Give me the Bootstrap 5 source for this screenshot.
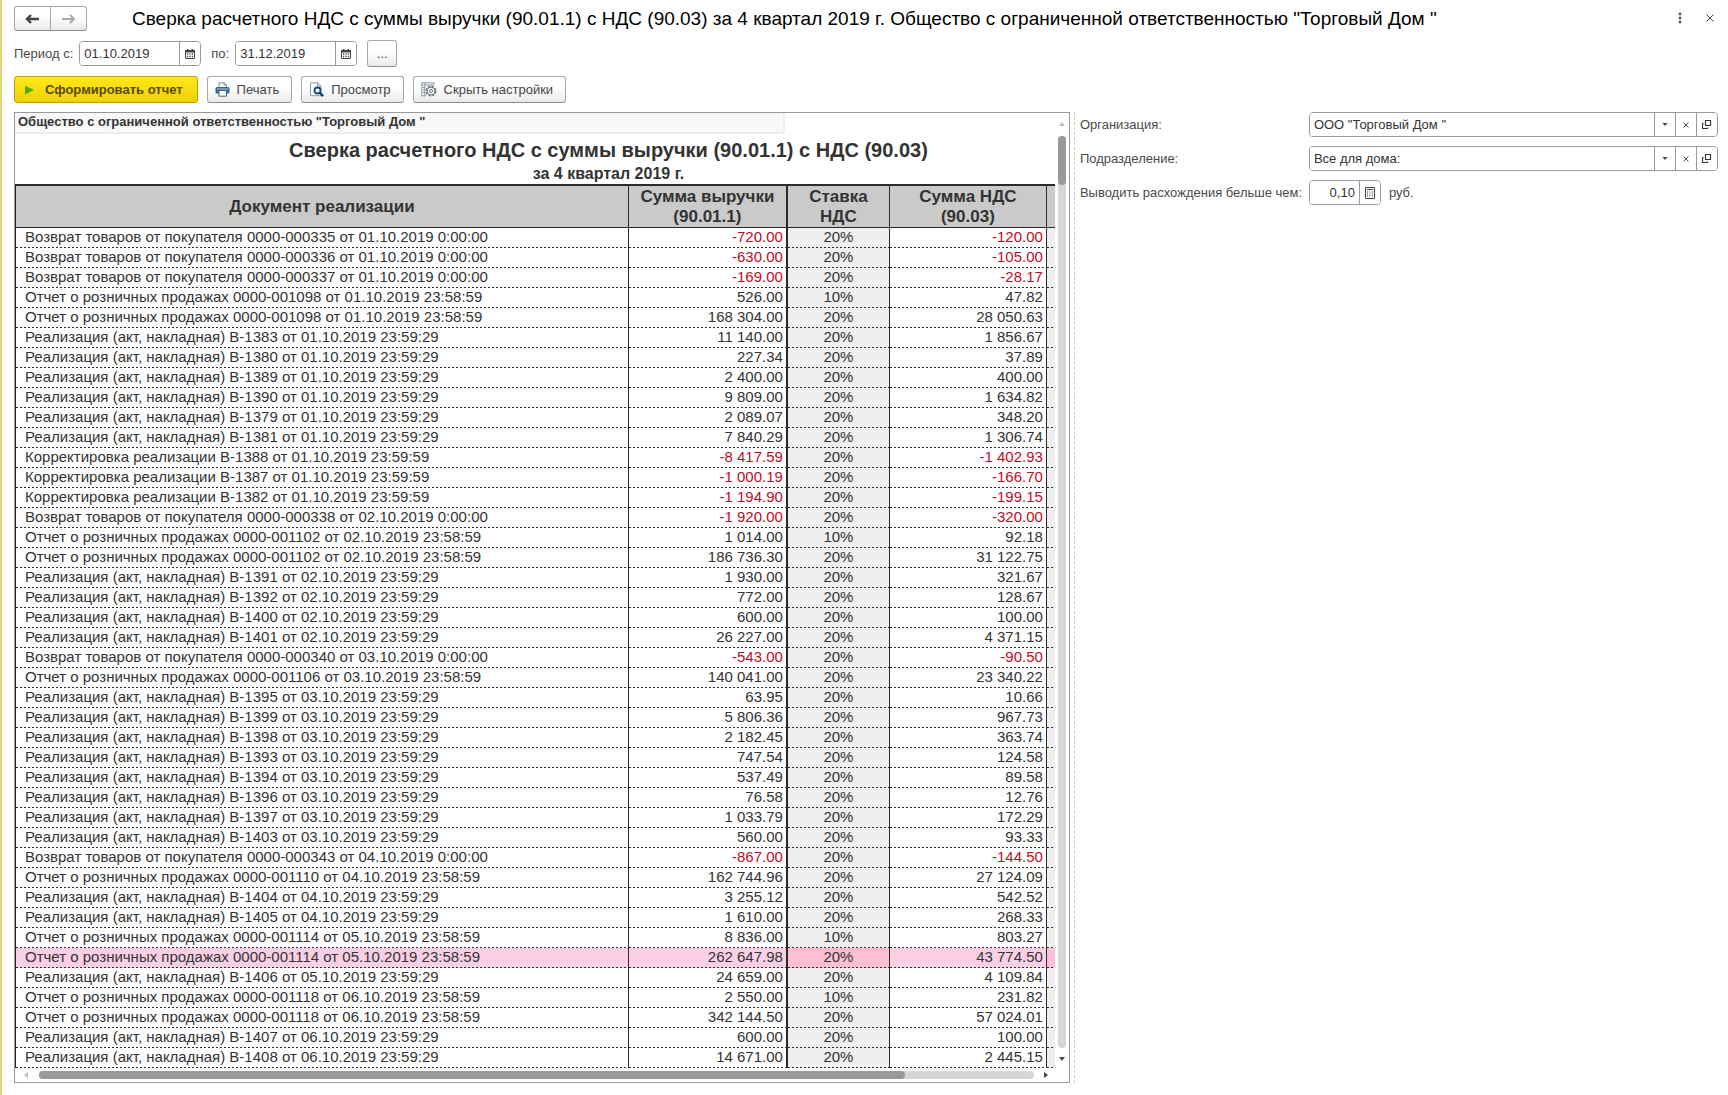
<!DOCTYPE html>
<html lang="ru">
<head>
<meta charset="utf-8">
<meta name="viewport" content="width=device-width, initial-scale=1">
<title>Сверка расчетного НДС</title>
<link href="https://cdn.jsdelivr.net/npm/bootstrap@5.3.0/dist/css/bootstrap.min.css" rel="stylesheet">
<style>
body{font-family:"Liberation Sans",Arial,sans-serif;font-size:13px;line-height:18px;color:#4a4a4a;background:#fff}
.app{border-left:2px solid #e3d370;padding:6px 10px 11px 12px;min-height:100vh}
.page-title{font-size:19px;line-height:26px;color:#000;margin:0 0 0 45px;font-weight:400}
.win-tools{gap:14px}
.win-btn{border:0;background:none;padding:0;width:16px;height:16px;display:flex;align-items:center;justify-content:center}
.btn-1c{font-size:13px;line-height:18px;color:#444;border:1px solid #a9a9a9;border-bottom-color:#8c8c8c;border-radius:3px;background:linear-gradient(#fff 40%,#e9e9e9);padding:0 12px 0 7px;height:27px;display:inline-flex;align-items:center;gap:7px}
.btn-1c:hover{background:#eee;border-color:#999}
.nav-group .btn-1c{width:37px;height:25px;padding:0;justify-content:center}
.btn-go{font-weight:700;color:#5a4a00;background:linear-gradient(#ffe81f,#f0d000);border-color:#b9a30c;padding:0 14px 0 10px;gap:10px}
.btn-go:hover{background:#f5d800}
.btn-dots{width:30px;padding:0;justify-content:center;margin-left:4px}
.tools{gap:9px;margin:9px 0}
.period{gap:6px;margin-top:8px}
.field{border:1px solid #999;border-radius:4px;height:25px;display:flex;background:#fff;overflow:hidden}
.field input,.field select{border:0;font-size:13px;line-height:18px;color:#333;padding:0 4px;min-width:0;flex:1 1 0;background-color:#fff;outline:0;height:23px;appearance:none}
.field button{border:0;border-left:1px solid #999;background:#fff;width:21px;padding:0;flex:none;display:flex;align-items:center;justify-content:center}
.f-date{width:122px}
.f-num{width:72px}
.report{border:1px solid #999;flex:1 1 0;min-width:0;display:grid;grid-template-columns:minmax(0,1fr) 14px;grid-template-rows:auto 14px}
.sheet-org{background:#f8f8f8;border:solid #eee;border-width:0 2px 2px 0;font-weight:700;color:#333;width:74%;padding:0 3px;height:21px}
.sheet-title{font-size:20px;line-height:26px;font-weight:700;margin:3px 0 0;text-align:center;padding-left:147px;color:#333}
.sheet-sub{font-size:16px;line-height:20px;font-weight:700;margin:0;padding:1px 0 0 147px;text-align:center;color:#333}
.grid-tbl{width:100%;table-layout:fixed;border-collapse:separate;border-spacing:0;font-size:15px;line-height:18px;border-left:1px solid #2b2b2b;border-top:2px solid #2b2b2b;color:#333}
.c-sum{width:159px}
.c-rate{width:102px}
.c-vat{width:157px}
.c-rest{width:8px}
.grid-tbl th{background:#cacaca;font-size:17px;line-height:20px;font-weight:700;text-align:center;height:42px;padding:0 4px;border-right:1px solid #2b2b2b;border-bottom:1px solid #2b2b2b}
.grid-tbl td{height:20px;padding:0 3px 2px;text-align:right;white-space:nowrap;border-right:1px solid #2b2b2b;background-image:repeating-linear-gradient(90deg,#2b2b2b 0 2px,transparent 2px 4px);background-position:bottom;background-size:100% 1px;background-repeat:no-repeat}
.grid-tbl td:first-child{text-align:left;padding-left:9px}
.grid-tbl tr>:nth-child(2){border-right-width:2px}
.grid-tbl tr>:last-child{border-right:0;padding:0}
.grid-tbl td:nth-child(3){text-align:center}
.grid-tbl td:nth-child(3),.grid-tbl td:last-child{background-color:#efefef}
.grid-tbl .hit td{background-color:#fbd0e4}
.grid-tbl .hit td:nth-child(3),.grid-tbl .hit td:last-child{background-color:#fdbfd4}
.grid-tbl .neg{color:#c00c1e}
.sb-v{display:flex;flex-direction:column;align-items:center;padding:9px 3px 7px}
.sb-h{display:flex;align-items:center;padding:0 7px 0 9px}
.sb-track{background:#d6d6d6;border-radius:4px;flex:1 1 0}
.sb-v .sb-track{width:8px;margin:10px 0 9px}
.sb-h .sb-track{height:8px;margin:0 10px 0 11px}
.sb-thumb{background:#999;border-radius:4px}
.sb-v .sb-thumb{width:8px;height:49px}
.sb-h .sb-thumb{height:8px;width:87%}
.settings{width:37.8%;border-left:1px dashed #ccc;margin-left:4px;padding-left:5px}
.set-row{display:flex;align-items:center;margin-bottom:9px}
.set-label{width:223px;flex:none;margin-right:6px;white-space:nowrap}
svg{display:block;flex:none}
</style>
</head>
<body>
<svg width="0" height="0" class="position-absolute" aria-hidden="true">
  <symbol id="i-cal" viewBox="0 0 10 10"><path d="M.5 1.500h9v8h-9z" fill="#fff" stroke="#444"/><path d="M0 1h10v2.500H0zM2 0h1.500v1H2zM6.500 0H8v1H6.500z" fill="#444"/><path d="M2 5h1.200M4.400 5h1.200M6.800 5H8M2 7.500h1.200M4.400 7.500h1.200M6.800 7.500H8" stroke="#444" stroke-width="1.300"/></symbol>
  <symbol id="i-down" viewBox="0 0 6 4"><path d="M.5 0h5L3 3z" fill="#444"/></symbol>
  <symbol id="i-x" viewBox="0 0 6 6"><path d="M.5.5l5 5M5.500.5l-5 5" stroke="#555" fill="none"/></symbol>
  <symbol id="i-open" viewBox="0 0 10 10"><path d="M3.500.5h5v5h-5zM1.500 3.500h-1v5h5v-1" fill="none" stroke="#333" stroke-width="1.200"/></symbol>
</svg>
<div class="app">
  <header class="d-flex align-items-start">
    <div class="btn-group nav-group">
      <button class="btn btn-1c" type="button" aria-label="Назад"><svg width="15" height="10" viewBox="0 0 15 10"><path d="M6 1 2 5l4 4M2 5h12" fill="none" stroke="#444" stroke-width="2.400"/></svg></button>
      <button class="btn btn-1c" type="button" aria-label="Вперед"><svg width="15" height="10" viewBox="0 0 15 10"><path d="M9 1l4 4-4 4M13 5H1" fill="none" stroke="#aaa" stroke-width="2"/></svg></button>
    </div>
    <h1 class="page-title flex-grow-1">Сверка расчетного НДС с суммы выручки (90.01.1) с НДС (90.03) за 4 квартал 2019 г. Общество с ограниченной ответственностью "Торговый Дом "</h1>
    <div class="d-flex pt-1 win-tools">
      <button class="win-btn" type="button" aria-label="Меню"><svg width="4" height="12" viewBox="0 0 4 12" fill="#555"><circle cx="2" cy="2" r="1.400"/><circle cx="2" cy="6" r="1.400"/><circle cx="2" cy="10" r="1.400"/></svg></button>
      <button class="win-btn" type="button" aria-label="Закрыть"><svg width="8" height="8" viewBox="0 0 8 8"><path d="M.5.5l7 7M7.500.5l-7 7" stroke="#444" fill="none"/></svg></button>
    </div>
  </header>

  <div class="d-flex align-items-center period">
    <label for="d1">Период с:</label>
    <div class="field f-date"><input id="d1" type="text" value="01.10.2019"><button type="button" aria-label="Выбрать дату начала"><svg width="10" height="10"><use href="#i-cal"/></svg></button></div>
    <label for="d2" class="ms-1">по:</label>
    <div class="field f-date"><input id="d2" type="text" value="31.12.2019"><button type="button" aria-label="Выбрать дату окончания"><svg width="10" height="10"><use href="#i-cal"/></svg></button></div>
    <button class="btn btn-1c btn-dots" type="button">...</button>
  </div>

  <div class="d-flex tools">
    <button class="btn btn-1c btn-go" type="button"><svg width="10" height="10" viewBox="0 0 10 10"><path d="M0 .5l9 4.500-9 4.500z" fill="#4fae0a"/></svg>Сформировать отчет</button>
    <button class="btn btn-1c" type="button"><svg width="15" height="15" viewBox="0 0 15 15"><path d="M4 6V.8h5.500L11.500 3v3" fill="#fff" stroke="#7891a8"/><path d="M9 .8V3h2.500" fill="none" stroke="#7891a8"/><rect x=".5" y="5" width="14" height="6.500" rx="1.500" fill="#3d6485"/><path d="M2 7h11" stroke="#b9cad8"/><path d="M4 8.500h7.500v5.700H4z" fill="#fff" stroke="#3d6485"/></svg>Печать</button>
    <button class="btn btn-1c" type="button"><svg width="15" height="15" viewBox="0 0 15 15"><path d="M1.500.8h7l3.500 3.400v9.500H1.500z" fill="#fff" stroke="#7f9bb2"/><path d="M8.500.8v3.400H12" fill="none" stroke="#7f9bb2"/><circle cx="8.500" cy="8.500" r="3" fill="#fff" stroke="#124b75" stroke-width="1.800"/><path d="M10.600 10.600l3.600 3.600" stroke="#124b75" stroke-width="2.400"/></svg>Просмотр</button>
    <button class="btn btn-1c" type="button"><svg width="16" height="15" viewBox="0 0 16 15"><path d="M13 3V.8H.8v13H5M.8 3H13M3.800.8v13" fill="none" stroke="#8597a8"/><path d="M1.500 5.500H4M1.500 8H4M1.500 10.500H4" stroke="#8597a8"/><circle cx="10" cy="9" r="4.600" fill="#fff" stroke="#66727e" stroke-width="1.800" stroke-dasharray="2.200 1.400"/><circle cx="10" cy="9" r="3.900" fill="#fff" stroke="#66727e"/><circle cx="10" cy="9" r="1.500" fill="#fff" stroke="#66727e"/></svg>Скрыть настройки</button>
  </div>

  <main class="d-flex">
    <section class="report">
      <div class="sheet">
        <div class="sheet-org">Общество с ограниченной ответственностью "Торговый Дом "</div>
        <h2 class="sheet-title">Сверка расчетного НДС с суммы выручки (90.01.1) с НДС (90.03)</h2>
        <p class="sheet-sub">за 4 квартал 2019 г.</p>
        <table class="grid-tbl">
          <colgroup><col><col class="c-sum"><col class="c-rate"><col class="c-vat"><col class="c-rest"></colgroup>
          <thead><tr><th scope="col">Документ реализации</th><th scope="col">Сумма выручки (90.01.1)</th><th scope="col">Ставка<br>НДС</th><th scope="col">Сумма НДС<br>(90.03)</th><th></th></tr></thead>
          <tbody id="rows"></tbody>
        </table>
      </div>
      <div class="sb-v"><svg width="6" height="4" viewBox="0 0 6 4"><path d="M3 0l3 4H0z" fill="#bbb"/></svg><div class="sb-track"><div class="sb-thumb"></div></div><svg width="6" height="4" viewBox="0 0 6 4"><path d="M0 0h6L3 4z" fill="#444"/></svg></div>
      <div class="sb-h"><svg width="4" height="6" viewBox="0 0 4 6"><path d="M4 0v6L0 3z" fill="#bbb"/></svg><div class="sb-track"><div class="sb-thumb"></div></div><svg width="4" height="6" viewBox="0 0 4 6"><path d="M0 0l4 3-4 3z" fill="#444"/></svg></div>
    </section>

    <aside class="settings">
      <div class="set-row">
        <label class="set-label" for="org">Организация:</label>
        <div class="field flex-grow-1"><select id="org"><option>ООО "Торговый Дом "</option></select><button type="button" aria-label="Открыть список"><svg width="6" height="4"><use href="#i-down"/></svg></button><button type="button" aria-label="Очистить"><svg width="6" height="6"><use href="#i-x"/></svg></button><button type="button" aria-label="Открыть"><svg width="10" height="10"><use href="#i-open"/></svg></button></div>
      </div>
      <div class="set-row">
        <label class="set-label" for="dep">Подразделение:</label>
        <div class="field flex-grow-1"><select id="dep"><option>Все для дома:</option></select><button type="button" aria-label="Открыть список"><svg width="6" height="4"><use href="#i-down"/></svg></button><button type="button" aria-label="Очистить"><svg width="6" height="6"><use href="#i-x"/></svg></button><button type="button" aria-label="Открыть"><svg width="10" height="10"><use href="#i-open"/></svg></button></div>
      </div>
      <div class="set-row">
        <label class="set-label" for="lim">Выводить расхождения бельше чем:</label>
        <div class="field f-num"><input id="lim" class="text-end pe-1" type="text" value="0,10"><button type="button" aria-label="Калькулятор"><svg width="10" height="12" viewBox="0 0 10 12"><path d="M.5.5h9v11h-9zM2 2.500h6" fill="none" stroke="#444"/><path d="M2 5h6M2 7h6M2 9h6" stroke="#444" stroke-dasharray="1 1.400"/></svg></button></div>
        <span class="ms-2">руб.</span>
      </div>
    </aside>
  </main>
</div>
<script src="https://cdn.jsdelivr.net/npm/bootstrap@5.3.0/dist/js/bootstrap.bundle.min.js"></script>
<script>
const kinds = {
  V: "Возврат товаров от покупателя 0000-",
  O: "Отчет о розничных продажах 0000-",
  R: "Реализация (акт, накладная) В-",
  K: "Корректировка реализации В-"
};
const times = { V: "0:00:00", O: "23:58:59", R: "23:59:29", K: "23:59:59" };
// kind | number | day of October | revenue | VAT rate | VAT amount
const data = `V|000335|01|-720.00|20|-120.00
V|000336|01|-630.00|20|-105.00
V|000337|01|-169.00|20|-28.17
O|001098|01|526.00|10|47.82
O|001098|01|168 304.00|20|28 050.63
R|1383|01|11 140.00|20|1 856.67
R|1380|01|227.34|20|37.89
R|1389|01|2 400.00|20|400.00
R|1390|01|9 809.00|20|1 634.82
R|1379|01|2 089.07|20|348.20
R|1381|01|7 840.29|20|1 306.74
K|1388|01|-8 417.59|20|-1 402.93
K|1387|01|-1 000.19|20|-166.70
K|1382|01|-1 194.90|20|-199.15
V|000338|02|-1 920.00|20|-320.00
O|001102|02|1 014.00|10|92.18
O|001102|02|186 736.30|20|31 122.75
R|1391|02|1 930.00|20|321.67
R|1392|02|772.00|20|128.67
R|1400|02|600.00|20|100.00
R|1401|02|26 227.00|20|4 371.15
V|000340|03|-543.00|20|-90.50
O|001106|03|140 041.00|20|23 340.22
R|1395|03|63.95|20|10.66
R|1399|03|5 806.36|20|967.73
R|1398|03|2 182.45|20|363.74
R|1393|03|747.54|20|124.58
R|1394|03|537.49|20|89.58
R|1396|03|76.58|20|12.76
R|1397|03|1 033.79|20|172.29
R|1403|03|560.00|20|93.33
V|000343|04|-867.00|20|-144.50
O|001110|04|162 744.96|20|27 124.09
R|1404|04|3 255.12|20|542.52
R|1405|04|1 610.00|20|268.33
O|001114|05|8 836.00|10|803.27
O|001114|05|262 647.98|20|43 774.50
R|1406|05|24 659.00|20|4 109.84
O|001118|06|2 550.00|10|231.82
O|001118|06|342 144.50|20|57 024.01
R|1407|06|600.00|20|100.00
R|1408|06|14 671.00|20|2 445.15`;
const selected = 36;
document.getElementById("rows").innerHTML = data.split("\n").map((line, i) => {
  const [k, no, day, sum, rate, vat] = line.split("|");
  const neg = sum[0] === "-" ? ' class="neg"' : "";
  return `<tr${i === selected ? ' class="hit"' : ""}><td>${kinds[k]}${no} от ${day}.10.2019 ${times[k]}</td><td${neg}>${sum}</td><td>${rate}%</td><td${neg}>${vat}</td><td></td></tr>`;
}).join("");
</script>
</body>
</html>
